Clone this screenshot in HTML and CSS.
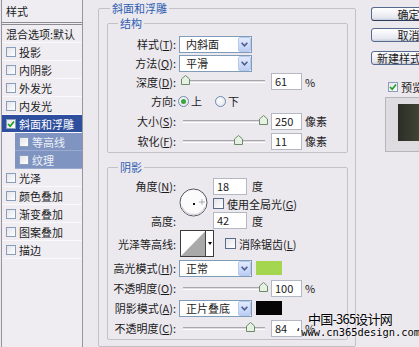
FILE: index.html
```html
<!DOCTYPE html>
<html>
<head>
    <meta charset="utf-8">
    <meta name="viewport" content="width=device-width, initial-scale=1.0">
    <link rel="stylesheet" href="styles.css">
</head>
<body>
<div class="dialog">
    <div class="style-list">
        <div class="list-head">样式</div>
        <div class="list-item blend">混合选项:默认</div>
        <div class="list-item"><span class="check"></span>投影</div>
        <div class="list-item"><span class="check"></span>内阴影</div>
        <div class="list-item"><span class="check"></span>外发光</div>
        <div class="list-item"><span class="check"></span>内发光</div>
        <div class="list-item active"><span class="check"><svg width="8" height="8" viewBox="0 0 8 8"><path d="M1 4 L3.2 6.2 L7 1.5" fill="none" stroke="#22a022" stroke-width="1.7"/></svg></span>斜面和浮雕</div>
        <div class="list-item sub"><span class="check"></span>等高线</div>
        <div class="list-item sub"><span class="check"></span>纹理</div>
        <div class="list-item"><span class="check"></span>光泽</div>
        <div class="list-item"><span class="check"></span>颜色叠加</div>
        <div class="list-item"><span class="check"></span>渐变叠加</div>
        <div class="list-item"><span class="check"></span>图案叠加</div>
        <div class="list-item"><span class="check"></span>描边</div>
    </div>

    <fieldset class="group outer">
        <legend>斜面和浮雕</legend>

        <fieldset class="group structure">
            <legend>结构</legend>
            <div class="row r20">
                <div class="label">样式(<u>T</u>):</div>
                <div class="select"><span>内斜面</span><span class="select-btn"><svg width="7" height="5" viewBox="0 0 7 5"><path d="M0.6 0.8 L3.5 3.8 L6.4 0.8" fill="none" stroke="#475d88" stroke-width="1.5"/></svg></span></div>
            </div>
            <div class="row r18">
                <div class="label">方法(<u>Q</u>):</div>
                <div class="select"><span>平滑</span><span class="select-btn"><svg width="7" height="5" viewBox="0 0 7 5"><path d="M0.6 0.8 L3.5 3.8 L6.4 0.8" fill="none" stroke="#475d88" stroke-width="1.5"/></svg></span></div>
            </div>
            <div class="row r19">
                <div class="label">深度(<u>D</u>):</div>
                <div class="slider-wrap"><div class="slider"><span class="thumb" style="left: 3%"><svg width="9" height="10" viewBox="0 0 9 10"><path d="M4.5 0.5 L8.5 4 V9.5 H0.5 V4 Z" fill="#e6f1e2" stroke="#6c8b6b"/></svg></span></div></div>
                <div class="num">61</div>
                <div class="unit">%</div>
            </div>
            <div class="row r20">
                <div class="label">方向:</div>
                <div class="radios">
                    <span class="radio on"></span><span class="radio-text">上</span>
                    <span class="radio"></span><span class="radio-text">下</span>
                </div>
            </div>
            <div class="row r20">
                <div class="label">大小(<u>S</u>):</div>
                <div class="slider-wrap"><div class="slider"><span class="thumb" style="left: 98%"><svg width="9" height="10" viewBox="0 0 9 10"><path d="M4.5 0.5 L8.5 4 V9.5 H0.5 V4 Z" fill="#e6f1e2" stroke="#6c8b6b"/></svg></span></div></div>
                <div class="num">250</div>
                <div class="unit">像素</div>
            </div>
            <div class="row r20">
                <div class="label">软化(<u>F</u>):</div>
                <div class="slider-wrap"><div class="slider"><span class="thumb" style="left: 67%"><svg width="9" height="10" viewBox="0 0 9 10"><path d="M4.5 0.5 L8.5 4 V9.5 H0.5 V4 Z" fill="#e6f1e2" stroke="#6c8b6b"/></svg></span></div></div>
                <div class="num">11</div>
                <div class="unit">像素</div>
            </div>
        </fieldset>

        <fieldset class="group shading">
            <legend>阴影</legend>
            <div class="angle-grid">
                <div class="label angle-label">角度(<u>N</u>):</div>
                <div class="dial">
                    <svg width="29" height="29" viewBox="0 0 29 29">
                        <circle cx="14.5" cy="14.5" r="13.5" fill="#fbfbfc" stroke="#56555d"/>
                        <path d="M3 19 A12.5 12.5 0 0 0 26 19" fill="none" stroke="#d6d4da" stroke-width="1.5"/>
                        <rect x="14" y="15" width="2" height="2" fill="#111"/>
                        <path d="M23 11.5 V16.5 M20.5 14 H25.5" stroke="#666" stroke-width="1" stroke-dasharray="1 1"/>
                    </svg>
                </div>
                <div class="num wide angle-num">18</div>
                <div class="unit angle-unit">度</div>
                <div class="check-line">
                    <span class="check box"></span>使用全局光(<u>G</u>)
                </div>
                <div class="label height-label">高度:</div>
                <div class="num wide height-num">42</div>
                <div class="unit height-unit">度</div>
            </div>

            <div class="row r29">
                <div class="label">光泽等高线:</div>
                <div class="contour">
                    <svg width="34" height="27" viewBox="0 0 34 27">
                        <rect x="0.5" y="0.5" width="33" height="26" fill="#fff" stroke="#3c3c3c"/>
                        <path d="M1 26 L25 1.5 V26 Z" fill="#a9a9a9"/>
                        <line x1="25.5" y1="1" x2="25.5" y2="26" stroke="#444"/>
                        <path d="M28 12 H32 L30 15 Z" fill="#000"/>
                    </svg>
                </div>
                <div class="check-line aa">
                    <span class="check box"></span>消除锯齿(<u>L</u>)
                </div>
            </div>
            <div class="row r20">
                <div class="label">高光模式(<u>H</u>):</div>
                <div class="select"><span>正常</span><span class="select-btn"><svg width="7" height="5" viewBox="0 0 7 5"><path d="M0.6 0.8 L3.5 3.8 L6.4 0.8" fill="none" stroke="#475d88" stroke-width="1.5"/></svg></span></div>
                <div class="swatch highlight"></div>
            </div>
            <div class="row r20">
                <div class="label">不透明度(<u>O</u>):</div>
                <div class="slider-wrap"><div class="slider"><span class="thumb" style="left: 98%"><svg width="9" height="10" viewBox="0 0 9 10"><path d="M4.5 0.5 L8.5 4 V9.5 H0.5 V4 Z" fill="#e6f1e2" stroke="#6c8b6b"/></svg></span></div></div>
                <div class="num">100</div>
                <div class="unit">%</div>
            </div>
            <div class="row r20">
                <div class="label">阴影模式(<u>A</u>):</div>
                <div class="select"><span>正片叠底</span><span class="select-btn"><svg width="7" height="5" viewBox="0 0 7 5"><path d="M0.6 0.8 L3.5 3.8 L6.4 0.8" fill="none" stroke="#475d88" stroke-width="1.5"/></svg></span></div>
                <div class="swatch shadow"></div>
            </div>
            <div class="row r20">
                <div class="label">不透明度(<u>C</u>):</div>
                <div class="slider-wrap"><div class="slider"><span class="thumb" style="left: 82%"><svg width="9" height="10" viewBox="0 0 9 10"><path d="M4.5 0.5 L8.5 4 V9.5 H0.5 V4 Z" fill="#e6f1e2" stroke="#6c8b6b"/></svg></span></div></div>
                <div class="num">84</div>
                <div class="unit">%</div>
            </div>
        </fieldset>
    </fieldset>

    <div class="actions">
        <div class="button default">确定</div>
        <div class="button cancel">取消</div>
        <div class="button new-style">新建样式(<u>W</u>)...</div>
        <div class="preview-check">
            <span class="check"><svg width="8" height="8" viewBox="0 0 8 8"><path d="M1 4 L3.2 6.2 L7 1.5" fill="none" stroke="#22a022" stroke-width="1.7"/></svg></span>预览
        </div>
        <div class="preview">
            <div class="preview-swatch"></div>
        </div>
    </div>
</div>

<div class="watermark">
    <div class="wm-cn">中国-365设计网</div>
    <div class="wm-url">‘www.cn365design.com</div>
</div>
</body>
</html>
```

FILE: styles.css
```css
* {
    box-sizing: border-box;
    margin: 0;
    padding: 0;
}

body {
    width: 419px;
    height: 347px;
    overflow: hidden;
    position: relative;
    background-color: #ebe8ee;
    font-family: "Noto Sans CJK SC", "Liberation Sans", sans-serif;
    font-size: 11px;
    color: #1b1b1b;
}

u {
    text-decoration: underline;
}

.dialog {
    display: flex;
    height: 347px;
}

.dialog > * {
    flex: none;
}

/* 왼쪽 스타일 목록 */
.style-list {
    width: 82px;
    height: 347px;
    margin-left: 1px;
    background-color: #efedf2;
    border-left: 1px solid #96939c;
    border-right: 1px solid #96939c;
}

.list-head {
    height: 25px;
    line-height: 22px;
    padding-left: 4px;
    border-bottom: 3px double #8d8a92;
}

.list-item {
    display: flex;
    align-items: center;
    height: 18px;
    padding-left: 4px;
    border-bottom: 1px solid #f9f8fb;
    white-space: nowrap;
}

.list-item.active {
    background-color: #2e4f9d;
    color: #fff;
}

.list-item.sub {
    margin-left: 13px;
    padding-left: 4px;
    background-color: #7f94c1;
    color: #eef1f8;
    border-bottom-color: #9aabcf;
}

.check {
    display: inline-flex;
    align-items: center;
    justify-content: center;
    width: 10px;
    height: 10px;
    margin-right: 3px;
    flex: none;
    border: 1px solid #8a9dbb;
    background: linear-gradient(135deg, #e4e4ea, #ffffff);
}

/* 그룹 박스 */
.group {
    border: 1px solid #c3c0c8;
    border-radius: 2px;
    min-width: 0;
}

.group legend {
    font-size: 11px;
    line-height: 16px;
    padding: 0 2px;
    color: #2f5fb2;
}

.outer {
    width: 258px;
    height: 347px;
    margin-left: 15px;
    padding: 0 7px 0 8px;
}

.outer > legend {
    margin-left: 3px;
}

.structure,
.shading {
    padding: 3px 0 1px 0;
}

.structure {
    margin-top: -1px;
}

.shading {
    margin-top: 6px;
    padding-top: 2px;
}

.structure > legend,
.shading > legend {
    margin-left: 10px;
}

.row {
    display: flex;
    align-items: center;
}

.r18 { height: 18px; }
.r19 { height: 19px; }
.r20 { height: 20px; }
.r29 { height: 29px; }

.label {
    width: 71px;
    padding-right: 3px;
    text-align: right;
    white-space: nowrap;
    flex: none;
}

/* 선택 상자 */
.select {
    display: flex;
    align-items: center;
    justify-content: space-between;
    width: 73px;
    height: 17px;
    padding-left: 6px;
    background-color: #fff;
    border: 1px solid #7f9db9;
    flex: none;
}

.select-btn {
    display: flex;
    align-items: center;
    justify-content: center;
    width: 13px;
    height: 15px;
    border-radius: 2px;
    border: 1px solid #b8c9ee;
    background: linear-gradient(#e2eafc, #bccef4);
}

/* 슬라이더 */
.slider-wrap {
    width: 92px;
    padding-left: 4px;
    flex: none;
}

.slider {
    position: relative;
    width: 82px;
    height: 3px;
    background-color: #dedbe2;
    border-top: 1px solid #a9a6ae;
    border-bottom: 1px solid #fff;
}

.thumb {
    position: absolute;
    top: -6px;
    margin-left: -4px;
    line-height: 0;
}

.num {
    width: 31px;
    height: 17px;
    line-height: 15px;
    padding-left: 3px;
    background-color: #fff;
    border: 1px solid #b4b8c4;
    flex: none;
}

.num.wide {
    width: 34px;
}

.unit {
    padding-left: 3px;
    white-space: nowrap;
}

/* 라디오 */
.radios {
    display: flex;
    align-items: center;
    margin-left: -1px;
}

.radio {
    position: relative;
    width: 11px;
    height: 11px;
    border-radius: 50%;
    border: 1px solid #6f8bb3;
    background: radial-gradient(circle at 40% 40%, #ffffff, #dcdfe8);
}

.radio.on::after {
    content: "";
    position: absolute;
    left: 2px;
    top: 2px;
    width: 5px;
    height: 5px;
    border-radius: 50%;
    background-color: #3aa63a;
}

.radio-text {
    margin: 0 13px 0 2px;
}

/* 각도 */
.angle-grid {
    display: grid;
    grid-template-columns: 71px 34px 34px auto;
    grid-template-rows: 18px 17px 17px;
    align-items: center;
}

.angle-label { grid-row: 1; grid-column: 1; }
.angle-num { grid-row: 1; grid-column: 3; }
.angle-unit { grid-row: 1; grid-column: 4; padding-left: 5px; }
.height-label { grid-row: 3; grid-column: 1; }
.height-num { grid-row: 3; grid-column: 3; }
.height-unit { grid-row: 3; grid-column: 4; padding-left: 5px; }

.dial {
    grid-row: 1 / 4;
    grid-column: 2;
    align-self: start;
    margin-top: 11px;
    line-height: 0;
}

.check-line {
    display: flex;
    align-items: center;
    white-space: nowrap;
}

.angle-grid .check-line {
    grid-row: 2;
    grid-column: 3 / 5;
}

.check.box {
    width: 11px;
    height: 11px;
    border-color: #5b6c8a;
}

.contour {
    margin-left: 1px;
    line-height: 0;
}

.check-line.aa {
    margin-left: 11px;
}

.swatch {
    width: 26px;
    height: 14px;
    margin-left: 4px;
}

.swatch.highlight {
    background-color: #a5d64f;
}

.swatch.shadow {
    background-color: #050505;
}

/* 오른쪽 버튼 */
.actions {
    width: 75px;
    margin-left: 15px;
    padding-top: 7px;
    display: flex;
    flex-direction: column;
}

.button {
    height: 14px;
    line-height: 12px;
    text-align: center;
    white-space: nowrap;
    overflow: hidden;
    border: 1px solid #56698e;
    border-radius: 3px;
    background: linear-gradient(#ffffff, #e6e8f0 80%, #c8cedc);
    margin-bottom: 9px;
}

.button.default {
    margin-bottom: 7px;
    border-bottom-color: #2d3b5a;
}

.button.new-style {
    text-align: left;
    padding-left: 5px;
}

.preview-check {
    display: flex;
    align-items: center;
    height: 11px;
    margin-top: 7px;
    padding-left: 17px;
    white-space: nowrap;
}

.preview {
    width: 60px;
    height: 55px;
    margin: 5px 0 0 14px;
    padding: 6px 0 0 12px;
    background-color: #dedbe1;
    border: 1px solid #b7b4bb;
    border-right: none;
}

.preview-swatch {
    width: 48px;
    height: 37px;
    background: linear-gradient(90deg, #2b2e27, #3d4232 40%, #6f8547 80%, #a4c65e);
}

/* 워터마크 */
.watermark {
    position: absolute;
    left: 295px;
    top: 311px;
    color: #000;
}

.wm-cn {
    margin-left: 13px;
    font-size: 13px;
    line-height: 15px;
    letter-spacing: -0.8px;
    text-shadow: 0 0 2px #fff;
}

.wm-url {
    font-family: "DejaVu Sans Mono", "Liberation Mono", monospace;
    font-size: 10.4px;
    line-height: 12px;
    text-shadow: 0 0 2px #fff;
}
```
